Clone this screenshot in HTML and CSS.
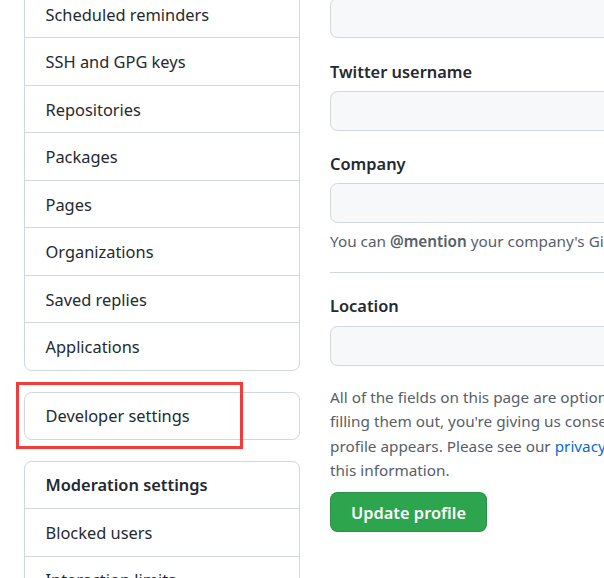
FILE: index.html
```html
<!DOCTYPE html>
<html>
<head>
<meta charset="utf-8">
<link rel="stylesheet" href="styles.css">
</head>
<body>
<div class="page">
  <aside class="sidebar">
    <nav class="menu menu-first">
      <a class="item">Scheduled reminders</a>
      <a class="item">SSH and GPG keys</a>
      <a class="item">Repositories</a>
      <a class="item">Packages</a>
      <a class="item">Pages</a>
      <a class="item">Organizations</a>
      <a class="item">Saved replies</a>
      <a class="item">Applications</a>
    </nav>
    <div class="dev-wrap">
      <nav class="menu">
        <a class="item">Developer settings</a>
      </nav>
      <div class="highlight"></div>
    </div>
    <nav class="menu">
      <div class="item heading">Moderation settings</div>
      <a class="item">Blocked users</a>
      <a class="item">Interaction limits</a>
    </nav>
  </aside>
  <main class="main">
    <div class="input first-input"></div>
    <div class="group">
      <label class="label">Twitter username</label>
      <div class="input"></div>
    </div>
    <div class="group">
      <label class="label">Company</label>
      <div class="input"></div>
      <p class="note">You can <strong>@mention</strong> your company's GitHub organization to link it.</p>
    </div>
    <hr class="rule">
    <div class="group group-loc">
      <label class="label">Location</label>
      <div class="input"></div>
    </div>
    <p class="info">All of the fields on this page are optional and can be deleted at any time, and by<br>filling them out, you're giving us consent to share this data wherever your user<br>profile appears. Please see our <a class="link">privacy statement</a> to learn more about how we use<br>this information.</p>
    <button class="btn">Update profile</button>
  </main>
</div>
</body>
</html>
```

FILE: styles.css
```css
html, body {
  margin: 0;
  padding: 0;
  overflow: hidden;
  background: #ffffff;
}
body {
  font-family: "Noto Sans", "Open Sans", sans-serif;
  color: #24292f;
  width: 604px;
  height: 578px;
}
.page {
  display: flex;
  align-items: flex-start;
  gap: 30px;
  padding-left: 24px;
}
.sidebar {
  width: 276px;
  flex: none;
  margin-top: -10.2px;
}
.menu {
  border: 1px solid #d0d7de;
  border-radius: 7.5px;
  box-sizing: border-box;
  background: #fff;
}
.dev-wrap {
  position: relative;
  margin-top: 20.7px;
}
.dev-wrap + .menu {
  margin-top: 20.5px;
}
.item {
  display: flex;
  align-items: center;
  height: 47.5px;
  box-sizing: border-box;
  border-top: 1px solid #d0d7de;
  padding-left: 20.5px;
  font-size: 16.4px;
  color: #24292f;
  white-space: nowrap;
}
.item:first-child {
  border-top: 0;
  height: 46.5px;
}
.heading {
  font-weight: 600;
}
.highlight {
  position: absolute;
  left: -8px;
  top: -9.5px;
  width: 227px;
  height: 67px;
  box-sizing: border-box;
  border: 3px solid #f23b3b;
}
.main {
  width: 420px;
  flex: none;
  margin-top: -1.7px;
}
.input {
  height: 40px;
  box-sizing: border-box;
  background: #f6f8fa;
  border: 1px solid #d0d7de;
  border-radius: 7.5px;
  width: 100%;
}
.group {
  margin-top: 20.25px;
}
.label {
  display: block;
  font-size: 16.4px;
  font-weight: 600;
  line-height: 26.25px;
  margin-bottom: 6px;
  white-space: nowrap;
}
.note {
  margin: 5px 0 0;
  font-size: 15.3px;
  line-height: 26px;
  color: #57606a;
  white-space: nowrap;
}
.note strong {
  font-weight: 600;
  color: #57606a;
}
.rule {
  margin: 18px 0 0;
  border: 0;
  border-top: 1px solid #d0d7de;
  height: 0;
}
.group-loc {
  margin-top: 20px;
}
.info {
  margin: 19.5px 0 0;
  font-size: 15.3px;
  line-height: 24.4px;
  color: #57606a;
  white-space: nowrap;
}
.link {
  color: #0969da;
}
.btn {
  display: block;
  margin-top: 9.6px;
  width: 157px;
  height: 40px;
  box-sizing: border-box;
  background: #2da44e;
  border: 1px solid rgba(27, 31, 36, 0.15);
  border-radius: 7.5px;
  color: #ffffff;
  font-family: "Noto Sans", "Open Sans", sans-serif;
  font-size: 16.4px;
  font-weight: 600;
  padding: 0;
}
```
